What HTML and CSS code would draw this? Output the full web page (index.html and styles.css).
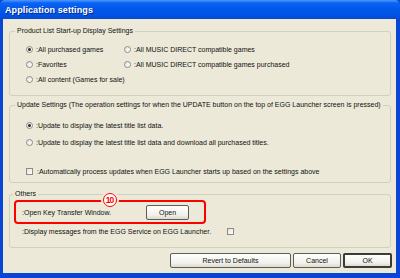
FILE: index.html
```html
<!DOCTYPE html>
<html>
<head>
    <title>Application settings</title>
    <link rel="stylesheet" href="styles.css">
</head>
<body>
    <div class="window">
        <div class="titlebar">Application settings</div>
        <div class="client">
            <fieldset class="group group-list">
                <legend>Product List Start-up Display Settings</legend>
                <div class="list-grid">
                    <label class="opt"><span class="radio checked"></span>:All purchased games</label>
                    <label class="opt"><span class="radio"></span>:All MUSIC DIRECT compatible games</label>
                    <label class="opt"><span class="radio"></span>:Favorites</label>
                    <label class="opt"><span class="radio"></span>:All MUSIC DIRECT compatible games purchased</label>
                    <label class="opt"><span class="radio"></span>:All content (Games for sale)</label>
                </div>
            </fieldset>

            <fieldset class="group group-update">
                <legend>Update Settings (The operation settings for when the UPDATE button on the top of EGG Launcher screen is pressed)</legend>
                <label class="opt"><span class="radio checked"></span>:Update to display the latest title list data.</label>
                <label class="opt opt-second"><span class="radio"></span>:Update to display the latest title list data and download all purchased titles.</label>
                <label class="opt opt-auto"><span class="check"></span>:Automatically process updates when EGG Launcher starts up based on the settings above</label>
            </fieldset>

            <fieldset class="group group-others">
                <legend>Others</legend>
                <div class="highlight">
                    <span class="badge">10</span>
                    <span class="row-text">:Open Key Transfer Window.</span>
                    <button class="btn btn-open">Open</button>
                </div>
                <div class="opt opt-messages">
                    <span class="row-text">:Display messages from the EGG Service on EGG Launcher.</span>
                    <span class="check check-right"></span>
                </div>
            </fieldset>

            <div class="actions">
                <button class="btn btn-revert">Revert to Defaults</button>
                <button class="btn btn-cancel">Cancel</button>
                <button class="btn btn-ok">OK</button>
            </div>
        </div>
    </div>
</body>
</html>
```

FILE: styles.css
```css
/* General */
body {
    margin: 0;
    font-family: "Liberation Sans", Arial, sans-serif;
    font-size: 7px;
    color: #111;
}

.window {
    width: 400px;
    height: 278px;
    display: flex;
    flex-direction: column;
    background-color: #0a45d6;
}

/* Title bar */
.titlebar {
    height: 19px;
    padding-left: 5px;
    display: flex;
    align-items: center;
    font-size: 9px;
    font-weight: bold;
    color: #fff;
    letter-spacing: 0.1px;
    text-shadow: 1px 1px 0 #0a2a8a;
    border-radius: 5px 5px 0 0;
    background: linear-gradient(#4e97ff 0, #0a64f2 3px, #0258ea 9px, #0053e4 15px, #0a48d2 19px);
}

.client {
    flex: 1;
    margin: 0 4px 5px 3px;
    background-color: #ece9d8;
    display: flex;
    flex-direction: column;
}

/* Group boxes */
.group {
    margin: 0 5px 0 6px;
    padding: 0 0 0 16px;
    border: 1px solid #d0d0bf;
    border-radius: 3px;
    min-width: 0;
}

.group legend {
    margin-left: -11px;
    padding: 0 2px;
    line-height: 10px;
    white-space: nowrap;
}

.group-list {
    margin-top: 7px;
    padding-top: 6px;
    padding-bottom: 8px;
}

.group-update {
    margin-top: 4px;
    padding-top: 8px;
    padding-bottom: 3px;
}

.group-others {
    margin-top: 6px;
    padding: 1px 0 8px 4px;
}

.group-others legend {
    margin-left: -1px;
}

.list-grid {
    display: grid;
    grid-template-columns: 98px auto;
    grid-auto-rows: 15px;
}

/* Options */
.opt {
    height: 15px;
    display: flex;
    align-items: center;
    white-space: nowrap;
}

.opt-second {
    margin-top: 2px;
}

.opt-auto {
    margin-top: 14px;
}

.radio, .check {
    width: 5px;
    height: 5px;
    margin-right: 3px;
    border: 1px solid #8d8d86;
    background: linear-gradient(135deg, #e4e3dc, #ffffff);
    flex-shrink: 0;
}

.radio {
    border-radius: 50%;
    display: flex;
    align-items: center;
    justify-content: center;
}

.radio.checked::after {
    content: "";
    width: 3px;
    height: 3px;
    border-radius: 50%;
    background-color: #2a2a2a;
}

.check {
    margin-right: 4px;
}

/* Others */
.highlight {
    position: relative;
    height: 20px;
    width: 167px;
    padding: 0 15px 0 6px;
    border: 2px solid #ff0000;
    border-radius: 4px;
    display: flex;
    align-items: center;
    justify-content: space-between;
}

.badge {
    position: absolute;
    left: 87px;
    top: -9px;
    width: 12px;
    height: 12px;
    border: 1.5px solid #ff0000;
    border-radius: 50%;
    background-color: #fff;
    box-shadow: 0 0 0 2px #ece9d8;
    color: #ff0000;
    font-size: 8.5px;
    font-weight: bold;
    letter-spacing: -1px;
    line-height: 12px;
    text-align: center;
    text-indent: -1px;
}

.opt-messages {
    padding-left: 8px;
}

.check-right {
    margin: 0 0 0 16px;
}

/* Buttons */
.btn {
    height: 15px;
    padding: 0;
    font-family: inherit;
    font-size: 7px;
    color: #111;
    border: 1px solid #5c5c58;
    border-radius: 2px;
    background: linear-gradient(#ffffff, #f1f0ea 70%, #dcdad0);
    cursor: pointer;
}

.btn-open {
    width: 43px;
}

.actions {
    margin: 5px 4px 0 0;
    display: flex;
    justify-content: flex-end;
    gap: 2px;
}

.btn-revert {
    width: 121px;
}

.btn-cancel {
    width: 48px;
}

.btn-ok {
    width: 49px;
    border: 2px solid #3b3b38;
}
```
